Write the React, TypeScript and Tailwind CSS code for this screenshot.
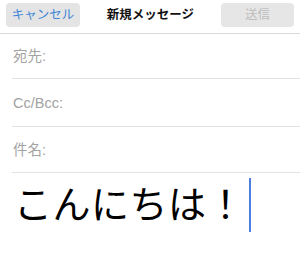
export default function App() {
  const font = { fontFamily: '"Liberation Sans", "Noto Sans CJK JP", sans-serif' };
  const rows = [
    { label: "宛先:", h: "h-[45px]" },
    { label: "Cc/Bcc:", h: "h-[48px]" },
    { label: "件名:", h: "h-[46px]" },
  ];

  return (
    <div className="w-[300px] h-[265px] bg-white overflow-hidden font-['Liberation_Sans','Noto_Sans_CJK_JP',sans-serif]" style={font}>
      <div className="h-[34px] flex items-start justify-between px-[6px] pt-[3px] border-b border-[#d9d9d9]">
        <button className="w-[74px] h-[24px] rounded-[4px] bg-[#e4e4e4] text-[#3f86d8] text-[12.5px] leading-none">
          キャンセル
        </button>
        <div className="h-[24px] flex items-center text-[12.5px] font-bold text-[#111]">
          新規メッセージ
        </div>
        <button className="w-[73px] h-[24px] rounded-[4px] bg-[#e6e6e6] text-[#bdbdbd] text-[12.5px] leading-none">
          送信
        </button>
      </div>

      {rows.map((r) => (
        <div key={r.label} className={`${r.h} pl-3`}>
          <div className="h-full flex items-center border-b border-[#e2e2e2] pt-[2px]">
            <span className="text-[14.5px] text-[#a3a3a3] pl-px">{r.label}</span>
          </div>
        </div>
      ))}

      <div className="pl-[14px] pt-[5px] flex items-center">
        <span className="text-[38px] leading-[54px] text-black tracking-[0.5px]">こんにちは！</span>
        <span className="ml-[4px] w-[1.5px] h-[54px] bg-[#4f7fdc]" />
      </div>
    </div>
  );
}
